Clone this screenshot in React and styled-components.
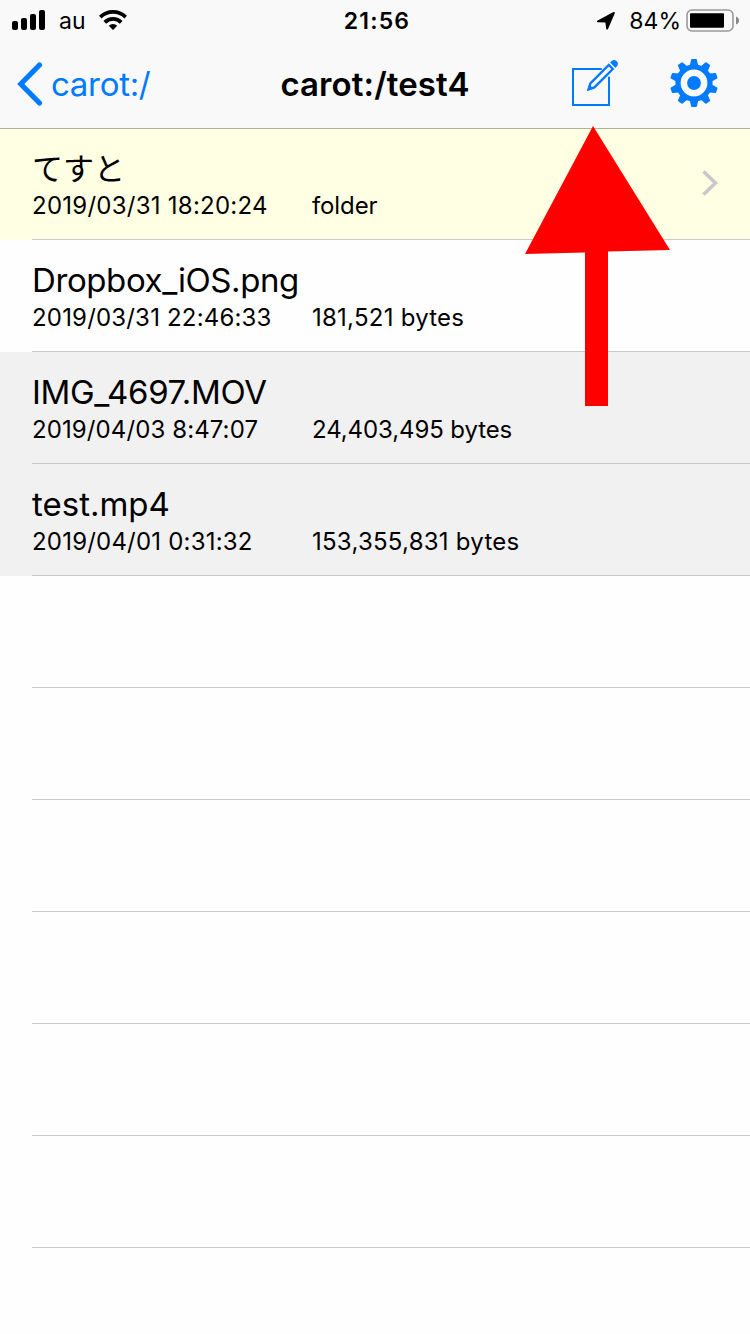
import React from 'react';
import styled, { createGlobalStyle } from 'styled-components';

const GlobalStyle = createGlobalStyle`
    body {
        margin: 0;
        background-color: #fefefe;
        font-family: Inter, "Noto Sans CJK JP", sans-serif;
        color: black;
    }
`
const Container = styled.div`
    position: relative;
    width: 750px;
    height: 1334px;
    overflow: hidden;
`
const Header = styled.header`
    position: relative;
    z-index: 1;
    height: 128px;
    background-color: #f9f9f9;
    box-shadow: 0 1px 0 rgba(0, 0, 0, 0.3);
`
const Icon = styled.svg`
    display: block;
    flex: none;
`
const StatusBar = styled.div`
    display: grid;
    grid-template-columns: 1fr auto 1fr;
    align-items: center;
    height: 40px;
    padding: 0 10px 0 12px;
`
const StatusLeft = styled.div`
    display: flex;
    align-items: center;
`
const StatusText = styled.span`
    padding-top: 2px;
    font-size: 23px;
    line-height: 38px;
`
const Carrier = styled(StatusText)`
    margin: 0 13px;
`
const Clock = styled(StatusText)`
    padding-left: 2px;
    font-weight: 600;
    letter-spacing: 1.2px;
`
const StatusRight = styled.div`
    display: flex;
    align-items: center;
    justify-content: flex-end;
`
const Percent = styled(StatusText)`
    margin: 0 5px 0 13px;
`
const NavBar = styled.nav`
    display: grid;
    grid-template-columns: 1fr auto 1fr;
    align-items: center;
    height: 88px;
    padding: 0 32px 0 17px;
`
const BackButton = styled.a`
    display: flex;
    align-items: center;
    gap: 8px;
    color: #007aff;
    font-size: 33px;
    line-height: 88px;
    letter-spacing: -0.3px;
`
const Title = styled.h1`
    margin: 0;
    padding-left: 15px;
    font-size: 33px;
    font-weight: 600;
    line-height: 88px;
    letter-spacing: 0.1px;
`
const Actions = styled.div`
    display: flex;
    justify-content: flex-end;
    gap: 51px;
    padding-bottom: 2px;
`
const List = styled.ul`
    margin: 0;
    padding: 0;
    list-style: none;
`
const Row = styled.li`
    display: flex;
    height: 112px;
    padding-left: 32px;
    background-color: ${props => props.$color || "transparent"};
`
const RowBody = styled.div`
    flex: 1;
    display: flex;
    align-items: center;
    justify-content: space-between;
    box-sizing: border-box;
    padding: 0 31px 1px 0;
    border-bottom: 1px solid #c8c8c8;
`
const Info = styled.div`
    align-self: flex-start;
    padding-top: 20px;
`
const FileName = styled.div`
    padding-top: ${props => props.$japanese ? "2px" : "0"};
    font-size: ${props => props.$japanese ? "31px" : "33px"};
    line-height: ${props => props.$japanese ? "38px" : "40px"};
    letter-spacing: ${props => props.$tracking || "0"};
    white-space: nowrap;
`
const Details = styled.div`
    display: grid;
    grid-template-columns: 280px auto;
    margin-top: 3px;
    font-size: 24px;
    line-height: 30px;
    white-space: nowrap;
`
const Detail = styled.span`
    letter-spacing: ${props => props.$tracking || "0.25px"};
`
const Arrow = styled(Icon)`
    position: absolute;
    left: 525px;
    top: 126px;
    z-index: 2;
`

const files = [
    { name: "てすと", date: "2019/03/31 18:20:24", size: "folder", color: "#ffffe3", japanese: true, folder: true, sizeTracking: "-0.1px" },
    { name: "Dropbox_iOS.png", date: "2019/03/31 22:46:33", size: "181,521 bytes", tracking: "-0.4px", dateTracking: "0.18px" },
    { name: "IMG_4697.MOV", date: "2019/04/03 8:47:07", size: "24,403,495 bytes", color: "#f1f1f1", tracking: "-0.35px", dateTracking: "0.1px", sizeTracking: "-0.1px" },
    { name: "test.mp4", date: "2019/04/01 0:31:32", size: "153,355,831 bytes", color: "#f1f1f1", dateTracking: "0.2px" },
]
const emptyRows = [1, 2, 3, 4, 5, 6, 7]
const teeth = [0, 36, 72, 108, 144, 180, 216, 252, 288, 324]

const Signal = () => (
    <Icon width="34" height="20" viewBox="0 0 34 20">
        <rect x="0" y="11" width="6" height="9" rx="2"/>
        <rect x="9" y="8" width="6" height="12" rx="2"/>
        <rect x="18" y="4" width="6" height="16" rx="2"/>
        <rect x="27" y="0" width="6" height="20" rx="2"/>
    </Icon>
)

const Wifi = () => (
    <Icon width="28" height="20" viewBox="0 0 28 20">
        <g fill="none" stroke="black" strokeWidth="3.8">
            <path d="M1.3 7.1a18.2 18.2 0 0 1 25.4 0"/>
            <path d="M5.8 12.3a11.6 11.6 0 0 1 16.4 0"/>
        </g>
        <path d="M14 20l-4.2-4.2a6 6 0 0 1 8.4 0z"/>
    </Icon>
)

const Location = () => (
    <Icon width="20" height="20" viewBox="0 0 20 20">
        <path d="M18.8 3.2L12 19q-1 1.500-1.800-.2L9.400 12.600 2 12.200q-2.200-.5-.3-1.800L17 2.200q2.200-.8 1.800 1z"/>
    </Icon>
)

const Battery = () => (
    <Icon width="54" height="24" viewBox="0 0 54 24">
        <rect x="1" y="2" width="46" height="21" rx="5" fill="none" stroke="#999" strokeWidth="1.6"/>
        <rect x="4" y="5.2" width="34" height="14.6" rx="1"/>
        <path d="M50 8.500q3 1.200 3 4t-3 4z" fill="#888"/>
    </Icon>
)

const Back = () => (
    <Icon width="26" height="44" viewBox="0 0 26 44">
        <path d="M22.5 3L3.8 22l18.7 19" fill="none" stroke="#007aff" strokeWidth="5.2" strokeLinecap="round"/>
    </Icon>
)

const Compose = () => (
    <Icon width="49" height="48" viewBox="0 0 49 48">
        <path d="M31.7 10H3v36h36V17.700" fill="none" stroke="#007aff" strokeWidth="2"/>
        <path d="M20.400 24.400L38.800 6l4 4L24.400 28.400l-5.900 2z" fill="#f9f9f9" stroke="#007aff" strokeWidth="2.300"/>
        <path d="M17.300 31.500l2-6 4 4z" fill="#007aff"/>
        <path d="M40.500 3.600l1.600-1.600q2.200-1.500 4.300.3t.6 4.500l-1.700 1.700z" fill="#007aff" stroke="#007aff" strokeWidth="0.700"/>
    </Icon>
)

const Gear = () => (
    <Icon width="48" height="48" viewBox="-24 -24 48 48">
        <circle r="16" fill="none" stroke="#007aff" strokeWidth="5.2"/>
        <circle r="6.9" fill="#007aff"/>
        {teeth.map(angle => (
            <path key={angle} d="M-4.200-17.500L-2.900-23.300q.2-.7.900-.7h4q.7 0 .9.700L4.200-17.500z" fill="#007aff" transform={`rotate(${angle})`}/>
        ))}
    </Icon>
)

const Chevron = () => (
    <Icon width="18" height="28" viewBox="0 0 18 28">
        <path d="M2.5 2.5L14.5 14l-12 11.5" fill="none" stroke="#c7c7cc" strokeWidth="3.6"/>
    </Icon>
)

const App = () => {
    return (
        <Container>
            <GlobalStyle/>
            <Header>
                <StatusBar>
                    <StatusLeft>
                        <Signal/>
                        <Carrier>au</Carrier>
                        <Wifi/>
                    </StatusLeft>
                    <Clock>21:56</Clock>
                    <StatusRight>
                        <Location/>
                        <Percent>84%</Percent>
                        <Battery/>
                    </StatusRight>
                </StatusBar>
                <NavBar>
                    <BackButton>
                        <Back/>
                        carot:/
                    </BackButton>
                    <Title>carot:/test4</Title>
                    <Actions>
                        <Compose/>
                        <Gear/>
                    </Actions>
                </NavBar>
            </Header>
            <List>
                {files.map(file => (
                    <Row key={file.name} $color={file.color}>
                        <RowBody>
                            <Info>
                                <FileName $japanese={file.japanese} $tracking={file.tracking}>{file.name}</FileName>
                                <Details>
                                    <Detail $tracking={file.dateTracking}>{file.date}</Detail>
                                    <Detail $tracking={file.sizeTracking}>{file.size}</Detail>
                                </Details>
                            </Info>
                            {file.folder && <Chevron/>}
                        </RowBody>
                    </Row>
                ))}
                {emptyRows.map(row => (
                    <Row key={row}>
                        <RowBody/>
                    </Row>
                ))}
            </List>
            <Arrow width="146" height="282" viewBox="0 0 146 282">
                <path d="M68 0L145 124 83 125.500V280H60V126.500L0 128z" fill="red"/>
            </Arrow>
        </Container>
    );
};

export default App;
